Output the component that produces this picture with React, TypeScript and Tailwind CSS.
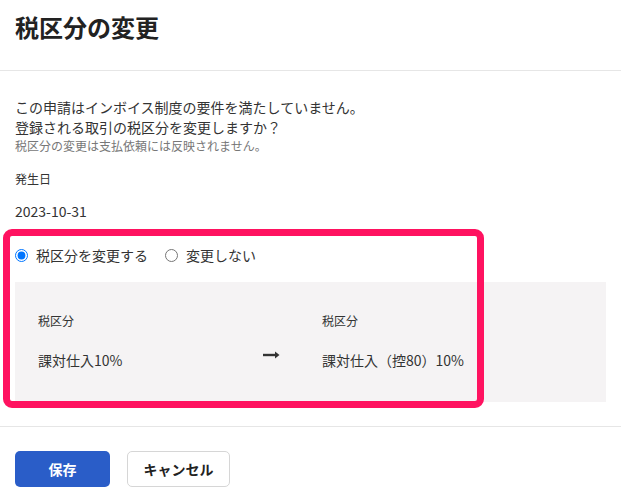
import * as React from "react";

const jp = { fontFamily: '"Noto Sans CJK JP", "Liberation Sans", sans-serif' };

const ArrowRight = () => (
  <svg width="17" height="10" viewBox="0 0 17 10" className="mb-3">
    <path d="M0 5h13" stroke="#333" strokeWidth="2.4" />
    <path d="M12 1.5L16.5 5L12 8.5Z" fill="#333" />
  </svg>
);

const App = () => {
  const [mode, setMode] = React.useState<string>("change");

  return (
    <div className="relative w-[621px] h-[498px] bg-white text-[#333]" style={jp}>
      {/* header */}
      <div className="h-[71px] px-[15px] pt-[11px] border-b border-[#e6e6e6]">
        <h1 className="text-[24px] leading-[32px] font-bold text-[#222]">税区分の変更</h1>
      </div>

      {/* body */}
      <div className="px-[15px] pt-[26px] pb-[24px] border-b border-[#e6e6e6]">
        <p className="text-[14px] leading-[20px]">この申請はインボイス制度の要件を満たしていません。</p>
        <p className="text-[14px] leading-[20px]">登録される取引の税区分を変更しますか？</p>
        <p className="text-[12px] leading-[18px] text-[#777]">税区分の変更は支払依頼には反映されません。</p>

        <p className="mt-[15px] text-[12px] leading-[18px]">発生日</p>
        <p className="mt-[13px] text-[14px] leading-[20px]">2023-10-31</p>

        <div className="mt-[24px] flex items-center h-[20px] text-[14px]">
          <label className="flex items-center cursor-pointer">
            <input
              type="radio"
              name="tax"
              checked={mode === "change"}
              onChange={() => setMode("change")}
              className="m-0 w-[13px] h-[13px]"
            />
            <span className="ml-[8px]">税区分を変更する</span>
          </label>
          <label className="flex items-center cursor-pointer ml-[17px]">
            <input
              type="radio"
              name="tax"
              checked={mode === "keep"}
              onChange={() => setMode("keep")}
              className="m-0 w-[13px] h-[13px]"
            />
            <span className="ml-[8px]">変更しない</span>
          </label>
        </div>

        <div className="mt-[17px] h-[120px] bg-[#f5f3f4] pl-[23px] pt-[30px] grid grid-cols-[225px_59px_1fr] content-start">
          <p className="text-[12px] leading-[18px]">税区分</p>
          <div />
          <p className="text-[12px] leading-[18px]">税区分</p>
          <p className="mt-[20px] text-[14px] leading-[20px]">課対仕入10%</p>
          <div className="mt-[20px] flex items-center">
            <ArrowRight />
          </div>
          <p className="mt-[20px] text-[14px] leading-[20px]">課対仕入（控80）10%</p>
        </div>
      </div>

      {/* footer */}
      <div className="px-[15px] pt-[24px] flex gap-[17px]">
        <button className="w-[95px] h-[36px] rounded-[5px] bg-[#2a5dc8] text-white text-[14px] font-bold">保存</button>
        <button className="w-[103px] h-[36px] rounded-[5px] border border-[#d6d6d6] bg-white text-[#222] text-[14px] font-bold">キャンセル</button>
      </div>

      {/* highlight annotation */}
      <div className="absolute left-[3px] top-[229px] w-[481px] h-[179px] border-[7px] border-[#ff1260] rounded-[9px] pointer-events-none" />
    </div>
  );
};

export default App;
